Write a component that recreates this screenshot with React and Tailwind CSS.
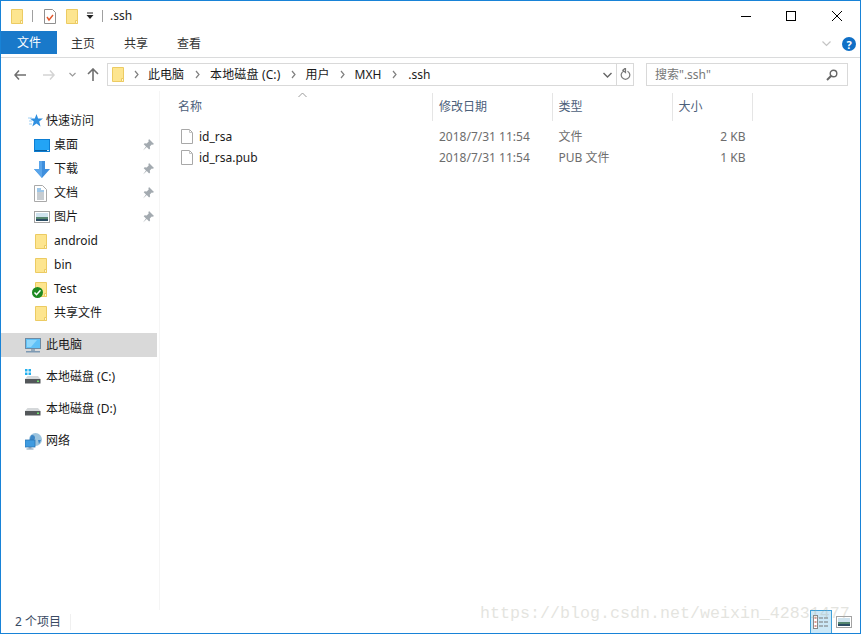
import React from 'react'

const FONT = "font-['Noto_Sans','Noto_Sans_CJK_SC',sans-serif]"

function Folder({ className = '' }) {
  return (
    <svg className={className} width="14" height="17" viewBox="0 0 14 17">
      <path d="M1.5 1.5h11v14h-11z" fill="#fde58f" stroke="#eccb62" />
      <path d="M10.5 15.5v-3h2v3z" fill="#fff6cf" stroke="#eccb62" />
    </svg>
  )
}

function FileIcon() {
  return (
    <svg width="14" height="17" viewBox="0 0 14 17">
      <path d="M1.5 1.5h8l3 3v11h-11z" fill="#fff" stroke="#a8a8a8" />
      <path d="M9.5 1.5v3h3" fill="none" stroke="#c4c4c4" />
    </svg>
  )
}

function Pin() {
  return (
    <svg width="12" height="12" viewBox="0 0 12 12">
      <path d="M7 0l5 5-1.2.8-1-.3-2 2 .3 2-1 1-2.3-2.4L1 11.500l3-3.900L1.700 5.300l1-1 2 .3 2-2-.3-1z" fill="#a3aab0" />
    </svg>
  )
}

function Desktop() {
  return (
    <svg width="16" height="13" viewBox="0 0 16 13">
      <rect width="16" height="13" fill="#0c7ed3" />
      <rect x="1" y="1" width="14" height="10" fill="#23a4f5" />
      <rect x="1" y="11" width="14" height="1" fill="#0a5f9f" />
      <rect x="13" y="11" width="2" height="1" fill="#cfe8f8" />
    </svg>
  )
}

function Download() {
  return (
    <svg width="16" height="17" viewBox="0 0 16 17">
      <path d="M5 0h6v8h5l-8 9-8-9h5z" fill="#3f8fdd" />
      <path d="M5 0h3v17l-8-9h5z" fill="#5aa5ea" />
    </svg>
  )
}

function Doc() {
  return (
    <svg width="13" height="17" viewBox="0 0 13 17">
      <path d="M.5.5h8l4 4v12H.5z" fill="#fff" stroke="#a9a9a9" />
      <path d="M3 4h4M3 6h7" stroke="#3c8fd1" />
      <path d="M3 8h7M3 10h7M3 12h7M3 14h7" stroke="#8f9aa3" />
    </svg>
  )
}

function Picture() {
  return (
    <svg width="16" height="12" viewBox="0 0 16 12">
      <rect x=".5" y=".5" width="15" height="11" fill="#fff" stroke="#a3a3a3" />
      <rect x="2" y="2" width="12" height="4" fill="#cfe3ee" />
      <rect x="2" y="6" width="12" height="2" fill="#55866f" />
      <rect x="2" y="8" width="12" height="2" fill="#2b4d63" />
    </svg>
  )
}

function Star() {
  return (
    <svg width="15" height="14" viewBox="0 0 15 14">
      <path d="M8.500 0l1.600 4.400 4.900.2-3.800 3 1.300 4.800-4-2.800-4.200 2.800 1.500-4.800-4-3 5-.2z" fill="#2f8fe0" />
      <path d="M0 4h4M1 7h3M1 10h3" stroke="#9fd0f5" />
    </svg>
  )
}

function Monitor() {
  return (
    <svg width="16" height="15" viewBox="0 0 16 15">
      <rect x=".5" y=".5" width="15" height="10" fill="#5fc1f7" stroke="#6d8aa3" />
      <path d="M2 2h10l-6 7H2z" fill="#8fd7fb" />
      <rect x="6" y="11" width="4" height="2" fill="#93a8ba" />
      <rect x="1" y="13" width="14" height="1.500" fill="#7d99b3" />
    </svg>
  )
}

function Drive({ system }) {
  return (
    <svg width="16" height="16" viewBox="0 0 16 16">
      {system && <path d="M0 0h2.500v2.500H0zM3.500 0H6v2.500H3.500zM0 3.500h2.500V6H0zM3.500 3.500H6V6H3.500z" fill="#22b0ee" />}
      <path d="M2.500 7h10.500l2.500 3H0z" fill="#d5d8da" />
      <rect y="10" width="15.500" height="4.500" fill="#53575a" />
      <rect x="12" y="11.500" width="2" height="1.500" fill="#6fe26f" />
    </svg>
  )
}

function Globe() {
  return (
    <svg width="17" height="17" viewBox="0 0 17 17">
      <circle cx="10.500" cy="6.500" r="6.500" fill="#9cc4de" />
      <path d="M7 2c2 0 3 1 3 3s-2 2-3 3-2 0-2-2 1-4 2-4zM13 7l3 0-2 4z" fill="#3b86c6" />
      <rect y="7" width="10" height="7" fill="#3f9be0" stroke="#2c76b4" strokeWidth=".8" />
      <rect x="3.500" y="14" width="3" height="1.500" fill="#7d99b3" />
      <rect x="1.500" y="15.500" width="7" height="1" fill="#7d99b3" />
    </svg>
  )
}

function NavRow({ icon, label, pinned, indent = 'pl-[33px]', gap = 'w-[20px]', active }) {
  return (
    <div className={`flex h-6 items-center ${indent} ${active ? 'bg-[#d9d9d9]' : ''}`}>
      <span className={`flex ${gap} shrink-0 items-center`}>{icon}</span>
      <span className="text-[12px] text-[#1a1a1a]">{label}</span>
      {pinned && (
        <span className="ml-auto mr-[3px]">
          <Pin />
        </span>
      )}
    </div>
  )
}

function Sep({ className = '' }) {
  return (
    <svg className={className} width="5" height="9" viewBox="0 0 5 9">
      <path d="M1 1l3 3.500L1 8" fill="none" stroke="#808080" strokeWidth="1.2" />
    </svg>
  )
}

const columns = 'grid grid-cols-[273px_119.5px_120px_80px]'

const files = [
  { name: 'id_rsa', type: '文件', size: '2 KB' },
  { name: 'id_rsa.pub', type: 'PUB 文件', size: '1 KB' },
]

export default function App() {
  return (
    <div className={`relative flex h-[634px] w-[861px] flex-col overflow-hidden border border-[#1883d7] bg-white ${FONT}`}>
      {/* title bar */}
      <div className="flex h-[30px] shrink-0 items-center pl-[9px]">
        <Folder />
        <span className="ml-[8px] h-3 w-px bg-[#a0a0a0]" />
        <svg className="ml-[10px]" width="14" height="17" viewBox="0 0 14 17">
          <path d="M1.500 1.500h8l3 3v11h-11z" fill="#fff" stroke="#8f8f8f" />
          <path d="M4 9l2 3 4-5" fill="none" stroke="#e2562a" strokeWidth="1.4" />
        </svg>
        <span className="ml-[8px] flex">
          <Folder />
        </span>
        <svg className="ml-[7px]" width="8" height="8" viewBox="0 0 8 8">
          <path d="M1 1h6" stroke="#222" />
          <path d="M0.500 3h7L4 7z" fill="#222" />
        </svg>
        <span className="ml-[8px] h-3 w-px bg-[#a0a0a0]" />
        <span className="ml-[7px] text-[12px] text-[#222]">.ssh</span>
        <div className="ml-auto flex items-center">
          <svg width="10" height="10" viewBox="0 0 10 10">
            <path d="M0 5.500h10" stroke="#000" />
          </svg>
          <svg className="ml-[35px]" width="10" height="10" viewBox="0 0 10 10">
            <rect x=".5" y=".5" width="9" height="9" fill="none" stroke="#000" />
          </svg>
          <svg className="ml-[36px] mr-[18px]" width="10" height="10" viewBox="0 0 10 10">
            <path d="M0 0l10 10M10 0L0 10" stroke="#000" />
          </svg>
        </div>
      </div>

      {/* ribbon tabs */}
      <div className="flex h-[27px] shrink-0 items-start border-b border-[#dadbdc] pr-[4px]">
        <div className="flex h-[23px] w-[56px] items-center justify-center bg-[#1979ca] pt-px text-[12px] text-white">文件</div>
        <div className="ml-[14px] flex h-[23px] items-center pt-[3px] text-[12px] text-[#333]">主页</div>
        <div className="ml-[29px] flex h-[23px] items-center pt-[3px] text-[12px] text-[#333]">共享</div>
        <div className="ml-[29px] flex h-[23px] items-center pt-[3px] text-[12px] text-[#333]">查看</div>
        <svg className="ml-auto mt-[10px]" width="9" height="6" viewBox="0 0 9 6">
          <path d="M.5.500l4 4 4-4" fill="none" stroke="#c4c4c4" strokeWidth="1.2" />
        </svg>
        <span className="ml-[11px] mt-[6px] flex h-[14px] w-[14px] items-center justify-center rounded-full bg-[#0f6fc6] text-[11px] font-bold leading-none text-white">?</span>
      </div>

      {/* address bar */}
      <div className="flex h-[33px] shrink-0 items-center">
        <svg className="ml-[13px]" width="12" height="10" viewBox="0 0 12 10">
          <path d="M5 .5L1 5l4 4.500M1 5h11" fill="none" stroke="#6f6f6f" strokeWidth="1.5" />
        </svg>
        <svg className="ml-[17px]" width="12" height="10" viewBox="0 0 12 10">
          <path d="M7 .5L11 5l-4 4.500M11 5H0" fill="none" stroke="#d4d4d4" strokeWidth="1.5" />
        </svg>
        <svg className="ml-[14px]" width="7" height="5" viewBox="0 0 7 5">
          <path d="M.5 1l3 3 3-3" fill="none" stroke="#9a9a9a" strokeWidth="1.2" />
        </svg>
        <svg className="ml-[11px]" width="12" height="13" viewBox="0 0 12 13">
          <path d="M1 6l5-5 5 5M6 1v12" fill="none" stroke="#6f6f6f" strokeWidth="1.6" />
        </svg>
        <div className="ml-[8px] flex h-[23px] w-[527px] items-center border border-[#d9d9d9] pl-[3px]">
          <Folder />
          <Sep className="ml-[9px]" />
          <span className="ml-[9px] text-[12px] text-[#1a1a1a]">此电脑</span>
          <Sep className="ml-[11px]" />
          <span className="ml-[10px] text-[12px] tracking-[0.15px] text-[#1a1a1a]">本地磁盘 (C:)</span>
          <Sep className="ml-[10px]" />
          <span className="ml-[10px] text-[12px] text-[#1a1a1a]">用户</span>
          <Sep className="ml-[10px]" />
          <span className="ml-[10px] text-[12px] text-[#1a1a1a]">MXH</span>
          <Sep className="ml-[11px]" />
          <span className="ml-[11px] text-[12px] text-[#1a1a1a]">.ssh</span>
          <svg className="ml-auto mr-[4px]" width="9" height="6" viewBox="0 0 9 6">
            <path d="M.5 1l4 4 4-4" fill="none" stroke="#666" strokeWidth="1.4" />
          </svg>
          <span className="flex h-full w-[17px] items-center justify-center border-l border-[#d9d9d9]">
            <svg width="11" height="13" viewBox="0 0 11 13">
              <path d="M3.500 3.200a4.300 4.300 0 1 0 4 0M5.500 0v4.500L2.800 2.200z" fill="none" stroke="#777" strokeWidth="1.2" />
            </svg>
          </span>
        </div>
        <div className="ml-[12px] flex h-[23px] w-[202px] items-center justify-between border border-[#d9d9d9] px-[9px]">
          <span className="-ml-px text-[12px] text-[#777]">搜索".ssh"</span>
          <svg width="12" height="12" viewBox="0 0 12 12">
            <circle cx="7.500" cy="4.500" r="3.300" fill="none" stroke="#666" strokeWidth="1.4" />
            <path d="M5 7l-4 4" stroke="#666" strokeWidth="2" />
          </svg>
        </div>
      </div>

      {/* body */}
      <div className="flex min-h-0 flex-1">
        <aside className="w-[159px] shrink-0 border-r border-[#f5f5f5] pt-[18px]">
          <div className="w-[156px]">
            <NavRow icon={<Star />} label="快速访问" indent="pl-[27px]" gap="w-[18px]" />
            <NavRow icon={<Desktop />} label="桌面" pinned />
            <NavRow icon={<Download />} label="下载" pinned />
            <NavRow icon={<Doc />} label="文档" pinned />
            <NavRow icon={<Picture />} label="图片" pinned />
            <NavRow icon={<Folder />} label="android" />
            <NavRow icon={<Folder />} label="bin" />
            <NavRow
              icon={
                <span className="relative flex">
                  <Folder />
                  <svg className="absolute -left-[2px] top-[6px]" width="11" height="11" viewBox="0 0 11 11">
                    <circle cx="5.500" cy="5.500" r="5.500" fill="#1e8a22" />
                    <path d="M2.500 5.500l2 2.200 4-4.500" fill="none" stroke="#fff" strokeWidth="1.5" />
                  </svg>
                </span>
              }
              label="Test"
            />
            <NavRow icon={<Folder />} label="共享文件" />
            <div className="mt-[8px]">
              <NavRow icon={<Monitor />} label="此电脑" indent="pl-[24px]" gap="w-[21px]" active />
            </div>
            <div className="mt-[8px]">
              <NavRow icon={<Drive system />} label="本地磁盘 (C:)" indent="pl-[24px]" gap="w-[21px]" />
            </div>
            <div className="mt-[8px]">
              <NavRow icon={<Drive />} label="本地磁盘 (D:)" indent="pl-[24px]" gap="w-[21px]" />
            </div>
            <div className="mt-[8px]">
              <NavRow icon={<Globe />} label="网络" indent="pl-[24px]" gap="w-[21px]" />
            </div>
          </div>
        </aside>

        <main className="min-w-0 flex-1">
          <div className={`relative mt-[2px] ${columns} h-[28px] items-center text-[12px] text-[#4c607a]`}>
            <span className="flex h-full items-center border-r border-[#e5e5e5] pl-[18px]">名称</span>
            <span className="flex h-full items-center border-r border-[#e5e5e5] pl-[6px]">修改日期</span>
            <span className="flex h-full items-center border-r border-[#e5e5e5] pl-[6px]">类型</span>
            <span className="flex h-full items-center border-r border-[#e5e5e5] pl-[6px]">大小</span>
            <svg className="absolute left-[138px] -top-px" width="9" height="6" viewBox="0 0 9 6">
              <path d="M.5 5L4.500 1l4 4" fill="none" stroke="#9a9a9a" />
            </svg>
          </div>
          <div className="pt-[5px]">
            {files.map((f) => (
              <div key={f.name} className={`${columns} h-[21px] items-center text-[12px] text-[#6d6d6d]`}>
                <span className="flex items-center pl-[20px]">
                  <FileIcon />
                  <span className="ml-[5px] text-[#1a1a1a]">{f.name}</span>
                </span>
                <span className="pl-[6px]">2018/7/31 11:54</span>
                <span className="pl-[6px]">{f.type}</span>
                <span className="pr-[7px] text-right">{f.size}</span>
              </div>
            ))}
          </div>
        </main>
      </div>

      {/* status bar */}
      <div className="flex h-[23px] shrink-0 items-center pl-[14px]">
        <span className="text-[12px] text-[#3a4a63]">2 个项目</span>
        <span className="ml-[9px] h-4 w-px bg-[#f0f0f0]" />
        <div className="ml-auto flex h-full items-center">
          <span className="flex h-full w-[22px] items-center justify-center border-x border-t border-[#3ea0d9] bg-[#cce8f7]">
            <svg width="16" height="14" viewBox="0 0 16 14">
              <rect x=".5" y=".5" width="4" height="13" fill="#fff" stroke="#888" />
              <path d="M1.500 3h2M1.500 7h2M1.500 11h2" stroke="#c0392b" />
              <path d="M6 3h4M11 3h4M6 7h4M11 7h4M6 11h4M11 11h4" stroke="#777" />
            </svg>
          </span>
          <span className="ml-[4px] mr-[8px] flex">
            <Picture />
          </span>
        </div>
      </div>

      {/* watermark */}
      <span className="pointer-events-none absolute left-[479px] top-[600px] font-['Liberation_Mono',monospace] text-[16.67px] text-[#a8a898] opacity-30">
        https://blog.csdn.net/weixin_42831477
      </span>
    </div>
  )
}
